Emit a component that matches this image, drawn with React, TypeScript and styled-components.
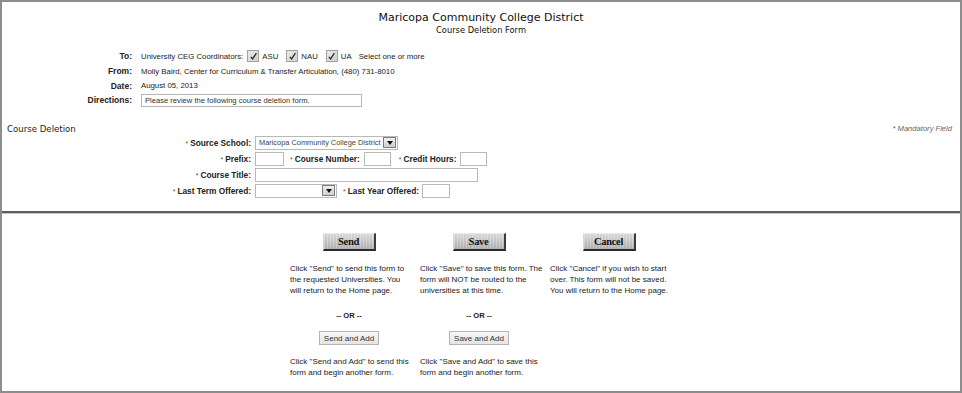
import React from 'react';
import styled, { createGlobalStyle } from 'styled-components';

const GlobalStyle = createGlobalStyle`
	html, body {
		margin: 0;
		padding: 0;
		background: #ffffff;
	}
	body {
		font-family: "Liberation Sans", Arial, sans-serif;
		color: #222;
	}
`;

export const Frame = styled.div`
	width: 962px;
	height: 393px;
	box-sizing: border-box;
	border: 2px solid #8d8d8d;
	display: flex;
	flex-direction: column;
	background: #fff;
`;

export const TopPanel = styled.section`
	height: 209px;
	display: flex;
	flex-direction: column;
`;

export const Divider = styled.hr`
	margin: 0;
	height: 2px;
	border: 0;
	background: #5e5e5e;
	border-bottom: 1px solid #c4c4c4;
`;

export const Header = styled.header`
	text-align: center;
	padding-top: 9px;
	font-family: "DejaVu Sans", Verdana, sans-serif;
	color: #111;
`;

export const Title = styled.div`
	font-size: 11px;
	line-height: 14px;
`;

export const SubTitle = styled.div`
	font-size: 8.3px;
	line-height: 10px;
`;

export const Memo = styled.div`
	margin-top: 14px;
	display: grid;
	grid-template-columns: 130px 1fr;
	grid-auto-rows: 14.7px;
	column-gap: 9px;
	align-items: center;
	font-size: 7.8px;
`;

export const MemoLabel = styled.div`
	text-align: right;
	font-weight: bold;
	font-size: 8.5px;
	color: #222;
`;

export const MemoValue = styled.div`
	display: flex;
	align-items: center;
	white-space: nowrap;
	color: #222;
`;

export const Check = styled.span`
	display: inline-flex;
	align-items: center;
	justify-content: center;
	width: 12px;
	height: 12px;
	box-sizing: border-box;
	border: 1px solid #a2a2a2;
	background: linear-gradient(135deg, #ececec, #cfcfcf);
	margin: 0 3px 0 4px;
`;

export const CheckText = styled.span<{ gap?: number }>`
	margin-right: ${p => p.gap ?? 4}px;
`;

export const TextBox = styled.span<{ w: number }>`
	display: inline-flex;
	align-items: center;
	width: ${p => p.w}px;
	height: 13px;
	box-sizing: border-box;
	border: 1px solid #b7b7b7;
	background: #fff;
	padding: 0 3px;
	font-size: 7.6px;
	color: #333;
	white-space: nowrap;
	overflow: hidden;
`;

export const SectionHead = styled.div`
	margin-top: 15px;
	height: 12px;
	display: flex;
	justify-content: space-between;
	align-items: center;
	padding: 0 8px 0 5px;
`;

export const SectionTitle = styled.div`
	font-family: "DejaVu Sans", Verdana, sans-serif;
	font-size: 8.6px;
	color: #222;
`;

export const Mandatory = styled.div`
	font-style: italic;
	font-size: 7.6px;
	color: #666;
`;

export const FormGrid = styled.div`
	display: grid;
	grid-template-columns: 249px 1fr;
	grid-auto-rows: 16px;
	column-gap: 4px;
	align-items: center;
`;

export const FieldLabel = styled.label<{ before?: number; after?: number }>`
	font-weight: bold;
	font-size: 8.3px;
	color: #222;
	white-space: nowrap;
	text-align: right;
	margin-left: ${p => p.before ?? 0}px;
	margin-right: ${p => p.after ?? 0}px;
`;

export const Star = styled.span`
	font-weight: normal;
	color: #555;
	font-size: 7px;
	margin-right: 2px;
`;

export const FieldLine = styled.div`
	display: flex;
	align-items: center;
`;

export const Input = styled.span<{ w: number }>`
	display: inline-block;
	width: ${p => p.w}px;
	height: 14px;
	box-sizing: border-box;
	border: 1px solid #b9b9b9;
	background: #fff;
`;

export const Select = styled.span<{ w: number }>`
	display: inline-flex;
	align-items: center;
	justify-content: space-between;
	width: ${p => p.w}px;
	height: 14px;
	box-sizing: border-box;
	border: 1px solid #b9b9b9;
	background: #fff;
	padding-left: 3px;
	font-size: 7.4px;
	color: #444;
	white-space: nowrap;
`;

export const DropButton = styled.span`
	display: inline-flex;
	align-items: center;
	justify-content: center;
	width: 13px;
	height: 11px;
	margin-right: 1px;
	box-sizing: border-box;
	border: 1px solid #7b7b7b;
	background: linear-gradient(#f0f0f0, #cfcfcf);

	&::after {
		content: '';
		border-left: 3px solid transparent;
		border-right: 3px solid transparent;
		border-top: 4px solid #111;
	}
`;

export const BottomPanel = styled.section`
	flex: 1;
	display: flex;
	justify-content: center;
	padding: 19px 4px 0 0;
`;

export const Actions = styled.div`
	display: grid;
	grid-template-columns: repeat(3, 118px);
	column-gap: 12px;
	align-items: start;
`;

export const ActionColumn = styled.div`
	display: flex;
	flex-direction: column;
	align-items: center;
`;

export const MetalButton = styled.button`
	width: 53px;
	height: 18px;
	padding: 0;
	box-sizing: border-box;
	border-style: solid;
	border-width: 1px 2px 2px 1px;
	border-color: #e8e8e8 #3c3c3c #2a2a2a #d8d8d8;
	background:
		repeating-linear-gradient(90deg, rgba(255,255,255,0.18) 0 1px, rgba(0,0,0,0.04) 1px 3px),
		linear-gradient(180deg, #dedede 0%, #c9c9c9 55%, #b4b4b4 100%);
	font-family: "Liberation Serif", "Times New Roman", serif;
	font-weight: bold;
	font-size: 10.5px;
	letter-spacing: -0.3px;
	color: #111;
	cursor: pointer;
`;

export const Note = styled.p<{ top: number }>`
	align-self: stretch;
	margin: ${p => p.top}px 0 0;
	font-size: 8px;
	line-height: 11px;
	color: #222;
	white-space: nowrap;
`;

export const Or = styled.div`
	margin-top: 14px;
	font-size: 7.6px;
	line-height: 11px;
	font-weight: bold;
	color: #222;
`;

export const PlainButton = styled.button`
	margin-top: 10px;
	width: 60px;
	height: 14px;
	padding: 0;
	box-sizing: border-box;
	border: 1px solid #b3b3b3;
	background: linear-gradient(#f7f7f7, #e4e4e4);
	font-family: "Liberation Sans", Arial, sans-serif;
	font-size: 8px;
	color: #333;
	cursor: pointer;
`;

const CheckMark = () => (
	<Check>
		<svg width="9" height="9" viewBox="0 0 9 9">
			<path d="M1.8 4.8 L3.6 6.9 L7.4 1.2" fill="none" stroke="#222" strokeWidth="1.2" />
		</svg>
	</Check>
);

const Req = ({ text, before, after }: { text: string; before?: number; after?: number }) => (
	<FieldLabel before={before} after={after}>
		<Star>*</Star>
		{text}
	</FieldLabel>
);

export default function App() {
	return (
		<>
			<GlobalStyle />
			<Frame>
				<TopPanel>
					<Header>
						<Title>Maricopa Community College District</Title>
						<SubTitle>Course Deletion Form</SubTitle>
					</Header>

					<Memo>
						<MemoLabel>To:</MemoLabel>
						<MemoValue>
							University CEG Coordinators:
							<CheckMark />
							<CheckText>ASU</CheckText>
							<CheckMark />
							<CheckText>NAU</CheckText>
							<CheckMark />
							<CheckText gap={7}>UA</CheckText>
							Select one or more
						</MemoValue>
						<MemoLabel>From:</MemoLabel>
						<MemoValue>Molly Baird, Center for Curriculum &amp; Transfer Articulation, (480) 731-8010</MemoValue>
						<MemoLabel>Date:</MemoLabel>
						<MemoValue>August 05, 2013</MemoValue>
						<MemoLabel>Directions:</MemoLabel>
						<MemoValue>
							<TextBox w={221}>Please review the following course deletion form.</TextBox>
						</MemoValue>
					</Memo>

					<SectionHead>
						<SectionTitle>Course Deletion</SectionTitle>
						<Mandatory>* Mandatory Field</Mandatory>
					</SectionHead>

					<FormGrid>
						<Req text="Source School:" />
						<FieldLine>
							<Select w={143}>
								Maricopa Community College District
								<DropButton />
							</Select>
						</FieldLine>

						<Req text="Prefix:" />
						<FieldLine>
							<Input w={29} />
							<Req text="Course Number:" before={6} after={4} />
							<Input w={27} />
							<Req text="Credit Hours:" before={8} after={3} />
							<Input w={27} />
						</FieldLine>

						<Req text="Course Title:" />
						<FieldLine>
							<Input w={223} />
						</FieldLine>

						<Req text="Last Term Offered:" />
						<FieldLine>
							<Select w={82}>
								<span />
								<DropButton />
							</Select>
							<Req text="Last Year Offered:" before={6} after={3} />
							<Input w={28} />
						</FieldLine>
					</FormGrid>
				</TopPanel>

				<Divider />

				<BottomPanel>
					<Actions>
						<ActionColumn>
							<MetalButton>Send</MetalButton>
							<Note top={12}>
								Click "Send" to send this form to<br />
								the requested Universities. You<br />
								will return to the Home page.
							</Note>
							<Or>-- OR --</Or>
							<PlainButton>Send and Add</PlainButton>
							<Note top={11}>
								Click "Send and Add" to send this<br />
								form and begin another form.
							</Note>
						</ActionColumn>

						<ActionColumn>
							<MetalButton>Save</MetalButton>
							<Note top={12}>
								Click "Save" to save this form. The<br />
								form will NOT be routed to the<br />
								universities at this time.
							</Note>
							<Or>-- OR --</Or>
							<PlainButton>Save and Add</PlainButton>
							<Note top={11}>
								Click "Save and Add" to save this<br />
								form and begin another form.
							</Note>
						</ActionColumn>

						<ActionColumn>
							<MetalButton>Cancel</MetalButton>
							<Note top={12}>
								Click "Cancel" if you wish to start<br />
								over. This form will not be saved.<br />
								You will return to the Home page.
							</Note>
						</ActionColumn>
					</Actions>
				</BottomPanel>
			</Frame>
		</>
	);
}
